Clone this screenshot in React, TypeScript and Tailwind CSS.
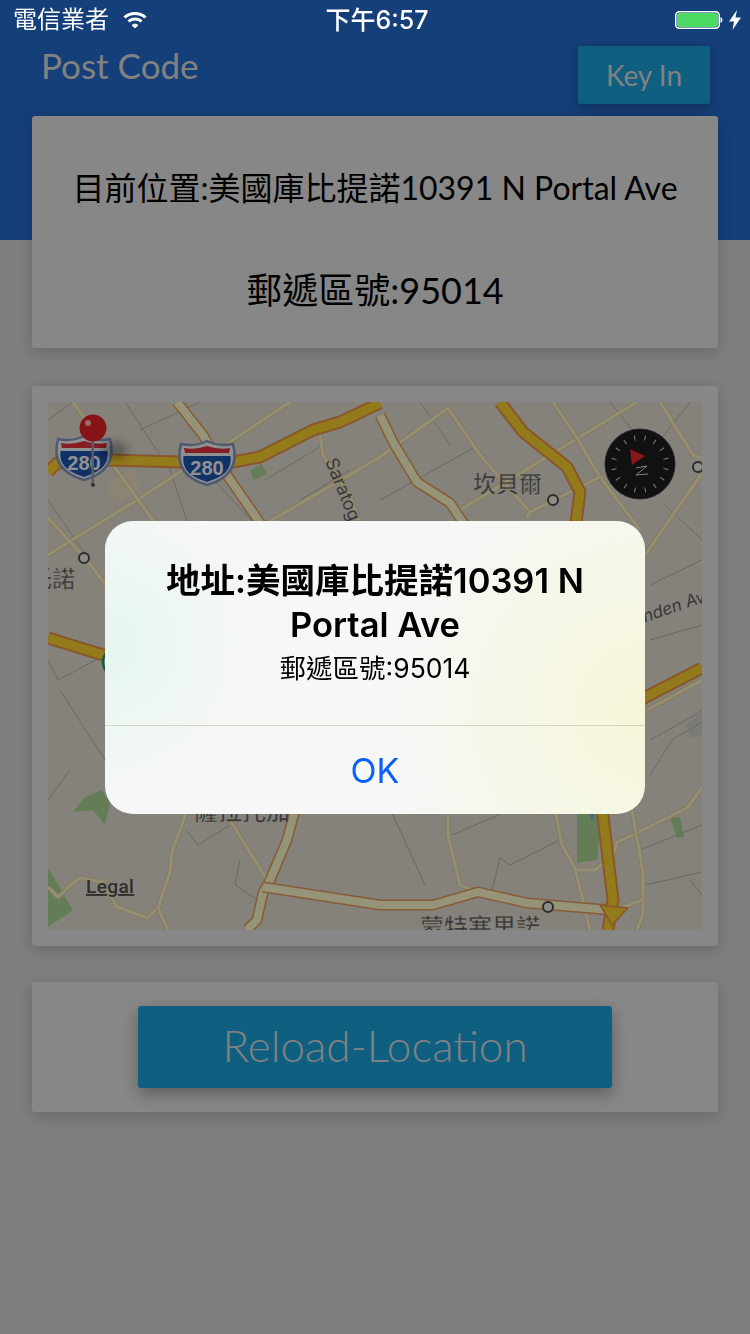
const latin = "font-['Lato','Noto_Sans_CJK_TC',sans-serif]";
const system = "font-['Inter','Noto_Sans_CJK_TC',sans-serif]";

// map drawing uses page coordinates, the viewBox shifts them into the panel
const highways = [
  "M48 472 L57 463 L110 460 L180 462 L233 462 L260 457 L313 430 L340 422 L380 403",
  "M500 402 L523 432 L567 467 L580 492 L575 530",
  "M48 638 L110 657",
  "M640 700 L702 668",
  "M602 808 L613 900 L608 930",
];

const wideRoads = [
  "M177 402 L203 435 L227 475 L265 530",
  "M380 415 L393 442 L417 482 L450 503 L468 530",
  "M247 930 L257 920 L263 893 L270 880 L287 840 L295 810",
  "M263 887 L380 905 L433 905 L478 892 L527 903 L610 910",
];

const minorRoads = [
  "M48 555 L137 500 L180 472 L230 442 L290 402",
  "M73 402 L97 435 L113 465 L160 530",
  "M320 435 L323 455 L350 495 L362 530",
  "M255 530 L380 457 L448 408 L480 455 L530 512",
  "M460 510 L637 402",
  "M553 402 L577 438 L600 477 L640 530",
  "M660 402 L693 455 L702 458",
  "M702 473 L645 555",
  "M527 518 L530 512 L600 477",
  "M48 887 L58 897 L73 883 L80 878 L103 882 L117 907 L147 918 L158 908 L170 872 L172 852 L187 810",
  "M158 908 L168 930",
  "M230 820 L267 880",
  "M448 810 L448 835 L460 885 L478 892",
  "M555 810 L562 845 L575 868 L590 930",
  "M577 870 L595 870 L613 855 L617 842 L637 833 L687 808 L702 788",
  "M632 810 L643 872 L643 913 L637 930",
  "M647 710 L702 680",
  "M623 907 L643 900",
  "M48 518 L85 558 L110 590",
];

const thinLines = [
  "M48 420 L73 402",
  "M125 402 L170 470 L190 530",
  "M140 430 L200 402",
  "M48 500 L110 590",
  "M205 470 L260 530",
  "M265 480 L323 445",
  "M300 500 L350 470",
  "M420 402 L450 445",
  "M380 500 L475 447",
  "M610 402 L640 440",
  "M690 402 L660 440",
  "M665 505 L702 540",
  "M650 585 L702 560",
  "M650 640 L702 625",
  "M650 740 L695 715 L702 710",
  "M650 775 L672 740 L702 722",
  "M48 660 L58 680 L105 655",
  "M60 690 L105 760",
  "M230 825 L198 845 L186 830",
  "M240 860 L235 885 L262 903",
  "M392 813 L425 885",
  "M452 835 L510 810",
  "M492 890 L500 858 L510 865 L560 840",
  "M640 850 L702 825",
  "M645 885 L702 872",
  "M690 880 L702 895",
  "M48 800 L70 770",
];

const ticks = Array.from({ length: 16 }, (_, i) => i * 22.5 + 11);

function Shield({ x, y }: { x: number; y: number }) {
  return (
    <g transform={`translate(${x} ${y})`}>
      <path
        d="M-26 -19 Q-12 -16 0 -22 Q12 -16 26 -19 C30 -4 28 14 0 22 C-28 14 -30 -4 -26 -19Z"
        fill="#eef0f4"
        stroke="#8496bc"
        strokeWidth="2.5"
      />
      <path d="M-23 -15 Q-12 -13 0 -17 Q12 -13 23 -15 L22 -10 L-22 -10Z" fill="#e0303c" />
      <path d="M-23.5 -7 L23.5 -7 C25 6 18 13 0 19 C-18 13 -25 6 -23.5 -7Z" fill="#1c54ac" />
      <text
        x="0"
        y="12"
        textAnchor="middle"
        fontFamily="Liberation Sans, sans-serif"
        fontWeight="700"
        fontSize="20"
        fill="#f2f2f2"
      >
        280
      </text>
    </g>
  );
}

function MapLabel({ x, y, children, size = 23 }: { x: number; y: number; children: string; size?: number }) {
  return (
    <text
      x={x}
      y={y}
      fontFamily="Noto Sans CJK TC, sans-serif"
      fontSize={size}
      fontWeight="500"
      fill="#5a5a5a"
      stroke="#e6e2d8"
      strokeWidth="0.4"
    >
      {children}
    </text>
  );
}

function MapPanel() {
  return (
    <svg viewBox="48 402 654 528" className="block h-[528px] w-[654px]">
      <rect x="48" y="402" width="654" height="528" fill="#ded9cd" />

      <path d="M48 868 L73 910 L48 927Z" fill="#a6d08f" />
      <path d="M73 812 L85 797 L102 790 L110 803 L105 825 L93 810Z" fill="#a6d08f" />
      <path d="M577 808 L602 808 L597 860 L577 863Z" fill="#a6d08f" />
      <path d="M587 808 L597 808 L592 822Z" fill="#7fb2d8" />
      <path d="M670 818 L680 817 L684 837 L677 838Z" fill="#a6d08f" />
      <path d="M250 470 L262 464 L267 474 L254 480Z" fill="#a6d08f" />
      <path d="M110 480 L135 470 L140 485 L120 505 L108 495Z" fill="#e8dcc0" />
      <path d="M685 725 L702 712 L702 735 L692 738Z" fill="#cfcbc2" />

      {thinLines.map((d) => (
        <path key={d} d={d} fill="none" stroke="#b3afa7" strokeWidth="1" />
      ))}
      {minorRoads.map((d) => (
        <g key={d} fill="none" strokeLinejoin="round">
          <path d={d} stroke="#e6cb98" strokeWidth="5" />
          <path d={d} stroke="#f4eec6" strokeWidth="3" />
        </g>
      ))}
      {wideRoads.map((d) => (
        <g key={d} fill="none" strokeLinejoin="round">
          <path d={d} stroke="#e09a5a" strokeWidth="11" />
          <path d={d} stroke="#f8f5c8" strokeWidth="8" />
        </g>
      ))}
      {highways.map((d) => (
        <g key={d} fill="none" strokeLinejoin="round">
          <path d={d} stroke="#e6904a" strokeWidth="13" />
          <path d={d} stroke="#f5cb2c" strokeWidth="9" />
        </g>
      ))}
      <path d="M600 905 L628 908 L612 925Z" fill="#f5cb2c" stroke="#e6904a" strokeWidth="1.5" />

      <circle cx="118" cy="662" r="15" fill="#f4f4f4" stroke="#1f9a6a" strokeWidth="2.5" />

      <Shield x={84} y={458} />
      <Shield x={207} y={463} />

      {[
        [84, 558],
        [553, 500],
        [548, 907],
        [698, 467],
      ].map(([cx, cy]) => (
        <circle key={cx} cx={cx} cy={cy} r="5" fill="#efece4" stroke="#4a4a4a" strokeWidth="2" />
      ))}

      <MapLabel x={29} y={587}>托諾</MapLabel>
      <MapLabel x={473} y={492}>坎貝爾</MapLabel>
      <MapLabel x={194} y={820} size={24}>薩拉托加</MapLabel>
      <MapLabel x={420} y={936} size={24}>蒙特塞里諾</MapLabel>
      <text
        transform="translate(325 461) rotate(68)"
        fontFamily="Inter, sans-serif"
        fontSize="18"
        fill="#5f5f5f"
      >
        Saratoga
      </text>
      <text
        transform="translate(632 627) rotate(-19)"
        fontFamily="Inter, sans-serif"
        fontSize="17"
        fontStyle="italic"
        fill="#5f5f5f"
      >
        Linden Av
      </text>
      <text
        x="86"
        y="893"
        fontFamily="Roboto, sans-serif"
        fontSize="19"
        fontWeight="500"
        letterSpacing="0.4"
        fill="#4d4d4d"
        textDecoration="underline"
      >
        Legal
      </text>

      <circle cx="640" cy="464" r="35" fill="#1d1d1d" stroke="#3d3d3d" strokeWidth="1" />
      {ticks.map((deg) => (
        <line
          key={deg}
          x1="640"
          y1="435"
          x2="640"
          y2="440"
          stroke="#cfcfcf"
          strokeWidth="1"
          transform={`rotate(${deg} 640 464)`}
        />
      ))}
      <path d="M630 449 L645 456 L632 465Z" fill="#e0252c" />
      <path d="M636 468 L647 466 L636 475 L648 474" fill="none" stroke="#d8d8d8" strokeWidth="1" />

      <ellipse cx="114" cy="450" rx="14" ry="9" fill="#000000" opacity="0.3" className="blur-[4px]" />
      <rect x="91.5" y="440" width="2.5" height="44" fill="#9a9a9a" />
      <circle cx="93" cy="485" r="2" fill="#555555" />
      <circle cx="93" cy="428" r="13.5" fill="#e02228" />
      <circle cx="88" cy="423" r="3" fill="#ffb4b4" />
    </svg>
  );
}

function StatusBar() {
  return (
    <div className={`relative z-20 flex h-10 items-center justify-between pl-[13px] pr-[9px] text-white ${system}`}>
      <div className="flex w-[200px] items-center gap-[14px]">
        <span className="text-[24px] leading-none">電信業者</span>
        <svg width="24" height="18" viewBox="0 0 24 18" fill="none" stroke="#ffffff" strokeWidth="3">
          <path d="M1.5 6.5 C7 1 17 1 22.5 6.5" />
          <path d="M5.5 10.5 C9 7 15 7 18.5 10.5" />
          <path d="M9 14.2 L12 17 L15 14.2 C13.5 12.8 10.5 12.8 9 14.2Z" fill="#ffffff" strokeWidth="1" />
        </svg>
      </div>
      <span className="text-[25px] font-medium leading-none">下午6:57</span>
      <div className="flex w-[200px] items-center justify-end gap-[6px]">
        <svg width="48" height="18" viewBox="0 0 48 18">
          <rect x="0.75" y="0.75" width="43.5" height="16.5" rx="3.5" fill="none" stroke="#ffffff" strokeWidth="1.5" />
          <rect x="2" y="2" width="41" height="14" rx="2" fill="#4cd964" />
          <path d="M45.5 6 C48 6.5 48 11.5 45.5 12Z" fill="#ffffff" />
        </svg>
        <svg width="12" height="20" viewBox="0 0 12 20">
          <path d="M8 0 L0 11.5 L5 11.5 L3.5 20 L12 7.5 L6.5 7.5Z" fill="#ffffff" />
        </svg>
      </div>
    </div>
  );
}

export default function App() {
  return (
    <div className={`relative min-h-[1334px] bg-[#d3d3d3] ${latin}`}>
      <header className="h-[240px] bg-[#2369c8]">
        <StatusBar />
        <div className="flex items-start justify-between pl-[41px] pr-[40px] pt-[6px]">
          <span className="-mt-[1px] text-[35px] leading-[40px] text-[#d8d8d8]">Post Code</span>
          <button
            type="button"
            className="h-[58px] w-[132px] rounded-[3px] bg-[#1a9ed8] text-[28px] text-[#d8d8d8] shadow-[0_4px_12px_rgba(0,0,0,0.25)]"
          >
            Key In
          </button>
        </div>
      </header>

      <main className="relative mx-[32px] -mt-[124px] flex flex-col">
        <section className="flex h-[232px] flex-col items-center rounded-[3px] bg-[#e1e1e1] pt-[50px] text-[32px] leading-[44px] text-black shadow-[0_4px_16px_rgba(0,0,0,0.18)]">
          <p>目前位置:美國庫比提諾10391 N Portal Ave</p>
          <p className="mt-[58px] text-[36px]">郵遞區號:95014</p>
        </section>

        <section className="mt-[38px] rounded-[3px] bg-[#e1e1e1] p-[16px] shadow-[0_4px_16px_rgba(0,0,0,0.18)]">
          <MapPanel />
        </section>

        <section className="mt-[36px] flex h-[130px] items-center justify-center rounded-[3px] bg-[#e1e1e1] shadow-[0_4px_16px_rgba(0,0,0,0.18)]">
          <button
            type="button"
            className="h-[82px] w-[474px] rounded-[3px] bg-[#1a9ed8] pb-[4px] text-[44px] font-light text-[#d8d8d8] shadow-[0_6px_16px_rgba(0,0,0,0.3)]"
          >
            Reload-Location
          </button>
        </section>
      </main>

      <div className="fixed inset-0 z-10 bg-black/40">
        <div
          className={`absolute left-[105px] top-[521px] w-[540px] overflow-hidden rounded-[28px] bg-[#f6f7f6] bg-[radial-gradient(circle_at_100%_65%,#f6f6d8_0%,transparent_45%),radial-gradient(circle_at_0%_42%,#e6f6ee_0%,transparent_28%)] text-center text-black ${system}`}
        >
          <div className="flex h-[204px] flex-col items-center px-[30px] pt-[38px]">
            <h2 className="text-[34.5px] font-semibold leading-[44px]">地址:美國庫比提諾10391 N Portal Ave</h2>
            <p className="mt-[3px] text-[26.5px] leading-[36px]">郵遞區號:95014</p>
          </div>
          <button
            type="button"
            className="block h-[89px] w-full border-t border-[#d5d6c4] text-[34px] text-[#0a60ff]"
          >
            OK
          </button>
        </div>
      </div>
    </div>
  );
}
